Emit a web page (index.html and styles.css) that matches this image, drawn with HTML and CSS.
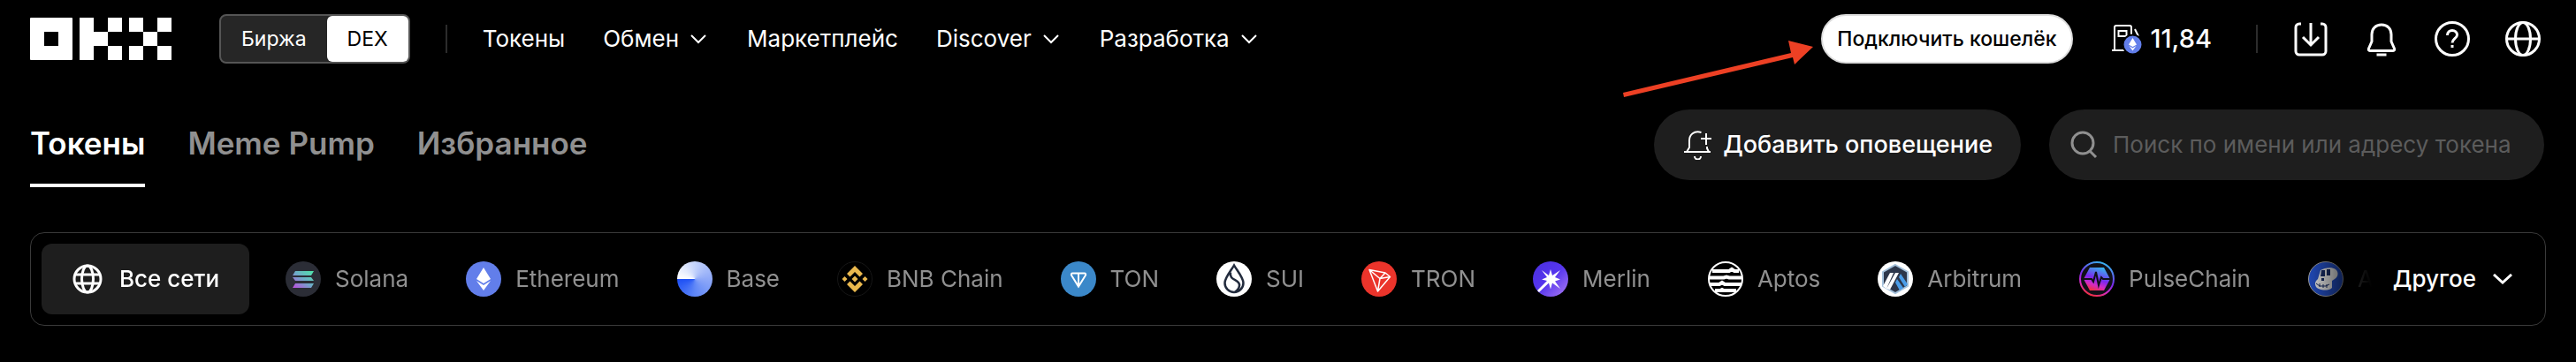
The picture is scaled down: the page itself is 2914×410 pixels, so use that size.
FILE: index.html
```html
<!DOCTYPE html>
<html lang="ru">
  <head>
    <meta charset="UTF-8" />
    <meta
      name="viewport"
      content="width=device-width, initial-scale=1.0"
    />
    <title>OKX DEX</title>
    <link rel="stylesheet" href="styles.css">
  </head>
  <body>
    <header id="main-header">
      <a class="logo" href="/" aria-label="OKX">
        <svg width="160" height="48" viewBox="0 0 160 48" fill="#fff">
          <path fill-rule="evenodd" d="M1 0h46a1 1 0 0 1 1 1v46a1 1 0 0 1-1 1H1a1 1 0 0 1-1-1V1a1 1 0 0 1 1-1zM16 16v16h16V16z" />
          <path d="M56 0h16v16h16v16H72v16H56zM88 0h16v16H88zM88 32h16v16H88z" />
          <path d="M112 0h16v16h-16zM144 0h16v16h-16zM128 16h16v16h-16zM112 32h16v16h-16zM144 32h16v16h-16z" />
        </svg>
      </a>

      <div class="switch">
        <button>Биржа</button>
        <button class="active">DEX</button>
      </div>

      <span class="divider"></span>

      <nav>
        <ul id="desktop-menu">
          <li><a href="/">Токены</a></li>
          <li>
            <a href="/">Обмен
              <svg class="chevron" viewBox="0 0 24 12"><path d="M4 2l8 8 8-8" /></svg>
            </a>
          </li>
          <li><a href="/">Маркетплейс</a></li>
          <li>
            <a href="/">Discover
              <svg class="chevron" viewBox="0 0 24 12"><path d="M4 2l8 8 8-8" /></svg>
            </a>
          </li>
          <li>
            <a href="/">Разработка
              <svg class="chevron" viewBox="0 0 24 12"><path d="M4 2l8 8 8-8" /></svg>
            </a>
          </li>
        </ul>
      </nav>

      <div class="header-actions">
        <div class="connect">
          <button class="connect-button">Подключить кошелёк</button>
          <svg class="arrow" width="216" height="64" viewBox="0 0 216 64" fill="#ed4024">
            <path d="M0 59L190 14l-3-14 28 7-21 20-2-8L1 64z" />
          </svg>
        </div>

        <a class="gas" href="/">
          <svg width="34" height="34" viewBox="0 0 34 34" fill="none" stroke="#fff" stroke-width="2">
            <path d="M0 30h14M3 30V4a2 2 0 0 1 2-2h15a2 2 0 0 1 2 2v9M7.500 8h9v6h-9zM26 6l4 8" />
            <circle cx="23.500" cy="23.500" r="11" fill="#627eea" stroke="#000" />
            <path d="M23.500 16l4.500 7.500-4.500 2.500-4.500-2.500zM19.500 25l4 2.500 4-2.500-4 5.500z" fill="#fff" stroke="none" />
          </svg>
          11,84
        </a>

        <span class="divider"></span>

        <div class="header-icons">
          <button aria-label="Скачать">
            <svg viewBox="0 0 40 40"><path d="M9 3H7a4 4 0 0 0-4 4v27a4 4 0 0 0 4 4h26a4 4 0 0 0 4-4V7a4 4 0 0 0-4-4h-2M20 2v25M11 18l9 9 9-9" /></svg>
          </button>
          <button aria-label="Уведомления">
            <svg viewBox="0 0 40 40"><path d="M20 4c-7 0-11 5-11 11v8L5.500 31c-.5 1.500 0 2.500 1.500 2.500h26c1.500 0 2-1 1.500-2.500L31 23v-8c0-6-4-11-11-11zM14.500 38h11" /></svg>
          </button>
          <button aria-label="Помощь">
            <svg viewBox="0 0 40 40"><circle cx="20" cy="20" r="18.500" /><path d="M14.500 16c0-3.500 2.500-5.500 5.500-5.500s5.500 2 5.500 5c0 4-5.500 4.500-5.500 9M20 27v3" /></svg>
          </button>
          <button aria-label="Язык">
            <svg viewBox="0 0 40 40"><circle cx="20" cy="20" r="18.500" /><ellipse cx="20" cy="20" rx="8.500" ry="18.500" /><path d="M2 20h36" /></svg>
          </button>
        </div>
      </div>
    </header>

    <main>
      <div class="toolbar">
        <nav class="tabs">
          <a class="active" href="/">Токены</a>
          <a href="/">Meme Pump</a>
          <a href="/">Избранное</a>
        </nav>

        <button class="alert-button">
          <svg width="32" height="34" viewBox="0 0 32 34" fill="none" stroke="#fff" stroke-width="2">
            <path d="M19.500 3C11 .5 6 6 6 12v8l-3 5M0 25h30M26 19v2l2 4M12 30a3.500 3.500 0 0 0 7 0M19 10h12M25 4v13" />
          </svg>
          Добавить оповещение
        </button>

        <label class="search">
          <svg width="32" height="32" viewBox="0 0 32 32" fill="none" stroke="#909090" stroke-width="3">
            <circle cx="14" cy="14" r="12" />
            <path d="M22 23l7 7" />
          </svg>
          <input type="text" aria-label="Поиск" placeholder="Поиск по имени или адресу токена" />
        </label>
      </div>

      <div class="networks">
        <ul class="network-list">
          <li>
            <button class="active">
              <svg viewBox="0 0 40 40" fill="none" stroke="#fff" stroke-width="3">
                <circle cx="20" cy="20" r="15" />
                <ellipse cx="20" cy="20" rx="6.500" ry="15" />
                <path d="M6.500 15h27M6.500 25h27" />
              </svg>
              Все сети
            </button>
          </li>
          <li>
            <button>
              <svg viewBox="0 0 40 40">
                <linearGradient id="solana" x1="0" y1="1" x2="1" y2="0">
                  <stop offset="0" stop-color="#c04be0" />
                  <stop offset="0.500" stop-color="#6fa8c8" />
                  <stop offset="1" stop-color="#4ee8a8" />
                </linearGradient>
                <circle cx="20" cy="20" r="20" fill="#2b2d36" />
                <path d="M11 11h21l-3 5H8zM8 18h21l3 4H11zM11 25h21l-3 5H8z" fill="url(#solana)" />
              </svg>
              Solana
            </button>
          </li>
          <li>
            <button>
              <svg viewBox="0 0 40 40">
                <circle cx="20" cy="20" r="20" fill="#627eea" />
                <path d="M20 7l8 13-8 5-8-5zM12 22l8 5 8-5-8 11z" fill="#fff" />
              </svg>
              Ethereum
            </button>
          </li>
          <li>
            <button>
              <span class="base-icon"></span>
              Base
            </button>
          </li>
          <li>
            <button>
              <svg viewBox="0 0 40 40" fill="#ebb94e">
                <circle cx="20" cy="20" r="19.500" fill="#000" stroke="#161616" />
                <path d="M20 5l9 9-3.500 3.500L20 12l-5.500 5.500L11 14zM20 35l9-9-3.500-3.500L20 28l-5.500-5.500L11 26zM20 16.500l3.500 3.500-3.500 3.500-3.500-3.500zM8.500 17l3 3-3 3-3-3zM31.500 17l3 3-3 3-3-3z" />
              </svg>
              BNB Chain
            </button>
          </li>
          <li>
            <button>
              <svg viewBox="0 0 40 40">
                <circle cx="20" cy="20" r="20" fill="#3b88c9" />
                <path d="M13.500 13.500h13a1.500 1.500 0 0 1 1.300 2.500L20 28.500 12.200 16a1.500 1.500 0 0 1 1.300-2.500zM20 14v14" fill="none" stroke="#fff" stroke-width="2" />
              </svg>
              TON
            </button>
          </li>
          <li>
            <button>
              <svg viewBox="0 0 40 40">
                <circle cx="20" cy="20" r="20" fill="#fff" />
                <path d="M20 4.500c3 5.500 10.500 14 10.500 20a10.500 10.500 0 0 1-21 0c0-6 7.500-14.500 10.500-20zM16 12.500c-2 10 11 7 10 15-.5 4-3 6-5 7" fill="none" stroke="#222b3d" stroke-width="2.500" />
              </svg>
              SUI
            </button>
          </li>
          <li>
            <button>
              <svg viewBox="0 0 40 40">
                <circle cx="20" cy="20" r="20" fill="#eb342b" />
                <path d="M9 9.500l18 3.500 5.500 4.500L18.500 34zM9 9.500l12 10L18.500 34M21 19.500l11.500-2M21 19.500L27 13" fill="none" stroke="#fff" stroke-width="1.500" stroke-linejoin="round" />
              </svg>
              TRON
            </button>
          </li>
          <li>
            <button>
              <svg viewBox="0 0 40 40">
                <linearGradient id="merlin" x1="0" y1="0" x2="1" y2="1">
                  <stop offset="0" stop-color="#4a2fe0" />
                  <stop offset="0.500" stop-color="#5636ee" />
                  <stop offset="1" stop-color="#ad7df2" />
                </linearGradient>
                <circle cx="20" cy="20" r="20" fill="url(#merlin)" />
                <path d="M20 9l2 7 9-6-6 8 6 2.500-6 2 6 8.500-9-6.500-2 7-2-7L7 35l-2-2 11-11-6-1.500 6-2.500-6-8 8 6z" fill="#fff" />
              </svg>
              Merlin
            </button>
          </li>
          <li>
            <button>
              <svg viewBox="0 0 40 40" fill="none" stroke="#fff">
                <circle cx="20" cy="20" r="19" fill="#000" stroke-width="2" />
                <path d="M5 11h19l3-2 3 2h5M2 18.500h16l3-1 3 1h14M2 26h11l3-2 3 2h19M8 33h6l2-1 2 1h14" stroke-width="4" />
              </svg>
              Aptos
            </button>
          </li>
          <li>
            <button>
              <svg viewBox="0 0 40 40">
                <circle cx="20" cy="20" r="20" fill="#fff" />
                <path d="M20 4l14 8v16l-14 8-14-8V12z" fill="#2d374b" stroke="#a5c2dc" stroke-width="2" />
                <path d="M14 13h4L10 31l-4-3zM20 13h4L14 32l-4-1z" fill="#fff" />
                <path d="M24 18l2-4 8 12-3 3zM20 24l2-4 7 10-4 3z" fill="#4b9de8" />
              </svg>
              Arbitrum
            </button>
          </li>
          <li>
            <button>
              <svg viewBox="0 0 40 40">
                <linearGradient id="pulse" x1="0.700" y1="0" x2="0.300" y2="1">
                  <stop offset="0" stop-color="#35b5ee" />
                  <stop offset="0.500" stop-color="#7a28ef" />
                  <stop offset="0.750" stop-color="#d42bc4" />
                  <stop offset="1" stop-color="#f0303c" />
                </linearGradient>
                <circle cx="20" cy="20" r="19" fill="#101018" stroke="url(#pulse)" stroke-width="2" />
                <path d="M12 7h16l7 13-7 13H12L5 20z" fill="url(#pulse)" />
                <path d="M5 20h9l2 3 3-11 3 15 3-9 2 2h8" fill="none" stroke="#101018" stroke-width="2" />
              </svg>
              PulseChain
            </button>
          </li>
          <li>
            <button>
              <svg viewBox="0 0 40 40">
                <circle cx="20" cy="20" r="19.500" fill="#2450c8" stroke="#aaa" />
                <path d="M14 10c5-3 13-4 17-1 4 3 3 9-1 11l-3 2v8c-4 4-15 3-18-1-2-4-1-6 2-9z" fill="#eee" />
                <path d="M15 10h4v7h-5zM21 9h4v7h-4zM15 19h3v3h-3z" fill="#182c66" />
                <path d="M9 25l4 3 7 0 4-2M13 25v4M17 26v4M21 26v4" fill="none" stroke="#182c66" />
              </svg>
              ApeChain
            </button>
          </li>
        </ul>

        <button class="more-button">
          Другое
          <svg class="chevron" viewBox="0 0 24 12"><path d="M2 1l10 9 10-9" /></svg>
        </button>
      </div>
    </main>
  </body>
</html>
```
FILE: styles.css
```css
* {
  margin: 0;
  padding: 0;
  box-sizing: border-box;
}

body {
  font-family: Inter, "Noto Sans", sans-serif;
  font-size: 26px;
  line-height: 40px;
  background-color: #000;
  color: #fff;
}

a {
  color: inherit;
  text-decoration: none;
}

ul {
  list-style: none;
}

button {
  font: inherit;
  color: inherit;
  border: none;
  background-color: transparent;
  white-space: nowrap;
  cursor: pointer;
}

svg {
  display: block;
  flex-shrink: 0;
}

#main-header {
  display: flex;
  align-items: center;
  height: 88px;
  padding-inline: 34px 40px;
}

.switch {
  display: flex;
  height: 56px;
  margin-inline: 54px 40px;
  border: 2px solid #555;
  border-radius: 8px;
  background-color: #262626;
  font-size: 23px;
}

.switch button {
  padding-inline: 23px;
}

.switch .active {
  border-radius: 6px;
  background-color: #fff;
  color: #000;
}

.divider {
  width: 2px;
  height: 32px;
  background-color: #2c2c2c;
}

#desktop-menu {
  display: flex;
  gap: 43px;
  margin-inline-start: 40px;
}

#desktop-menu a {
  display: flex;
  align-items: center;
  gap: 10px;
}

.chevron {
  width: 24px;
  height: 12px;
  fill: none;
  stroke: currentColor;
  stroke-width: 2;
}

.header-actions {
  display: flex;
  align-items: center;
  margin-inline-start: auto;
}

.connect {
  position: relative;
}

.connect-button {
  height: 56px;
  padding-inline: 16px;
  border: 2px solid #ddd;
  border-radius: 28px;
  background-color: #fff;
  color: #000;
  font-size: 23px;
  font-weight: 500;
}

/* pointer drawn beside the wallet button */
.arrow {
  position: absolute;
  top: 30px;
  right: calc(100% + 8px);
}

.gas {
  display: flex;
  align-items: center;
  gap: 10px;
  margin-inline: 44px 50px;
  font-size: 29px;
  font-weight: 500;
}

.header-icons {
  display: flex;
  gap: 40px;
  margin-inline-start: 40px;
}

.header-icons svg {
  width: 40px;
  height: 40px;
  fill: none;
  stroke: #fff;
  stroke-width: 3;
}

.toolbar {
  display: flex;
  align-items: flex-start;
  gap: 32px;
  padding: 36px 36px 0 34px;
}

.tabs {
  display: flex;
  gap: 48px;
  margin-inline-end: auto;
  font-size: 35px;
  font-weight: 600;
  color: #909090;
}

.tabs a {
  padding-block: 18px 26px;
  border-bottom: 4px solid transparent;
}

.tabs .active {
  border-color: #fff;
  color: #fff;
}

.alert-button {
  display: flex;
  align-items: center;
  gap: 12px;
  height: 80px;
  padding-inline: 34px 32px;
  border-radius: 40px;
  background-color: #1e1e1e;
  font-size: 27px;
  font-weight: 500;
}

.search {
  display: flex;
  align-items: center;
  gap: 16px;
  width: 560px;
  height: 80px;
  padding-inline: 24px 16px;
  border-radius: 40px;
  background-color: #1e1e1e;
}

.search input {
  flex: 1;
  min-width: 0;
  border: none;
  outline: none;
  background-color: transparent;
  font: inherit;
  color: #fff;
}

.search input::placeholder {
  color: #5c5c5c;
}

.networks {
  display: flex;
  align-items: center;
  margin: 51px 34px 0;
  padding: 12px;
  border: 1px solid #3a3a3a;
  border-radius: 16px;
}

/* the last network fades out under the "more" button */
.network-list {
  display: flex;
  flex: 1;
  gap: 1px;
  min-width: 0;
  overflow: hidden;
  mask-image: linear-gradient(to left, transparent, #000 80px);
}

.network-list button {
  display: flex;
  align-items: center;
  gap: 16px;
  height: 80px;
  padding-inline: 32px;
  border-radius: 12px;
  color: #909090;
}

.network-list .active {
  margin-inline-end: 8px;
  padding-inline-end: 34px;
  background-color: #1e1e1e;
  color: #fff;
  font-weight: 500;
}

.network-list svg,
.base-icon {
  width: 40px;
  height: 40px;
}

.base-icon {
  border-radius: 50%;
  background-image: conic-gradient(#c4d3fb, #8fa9f8 25%, #5f87f7 50%, #1c4ff5 75%, #fff 75%, #c4d3fb);
}

.more-button {
  display: flex;
  align-items: center;
  gap: 18px;
  padding-inline: 24px;
  font-weight: 500;
}

.more-button .chevron {
  stroke-width: 3;
}
```
